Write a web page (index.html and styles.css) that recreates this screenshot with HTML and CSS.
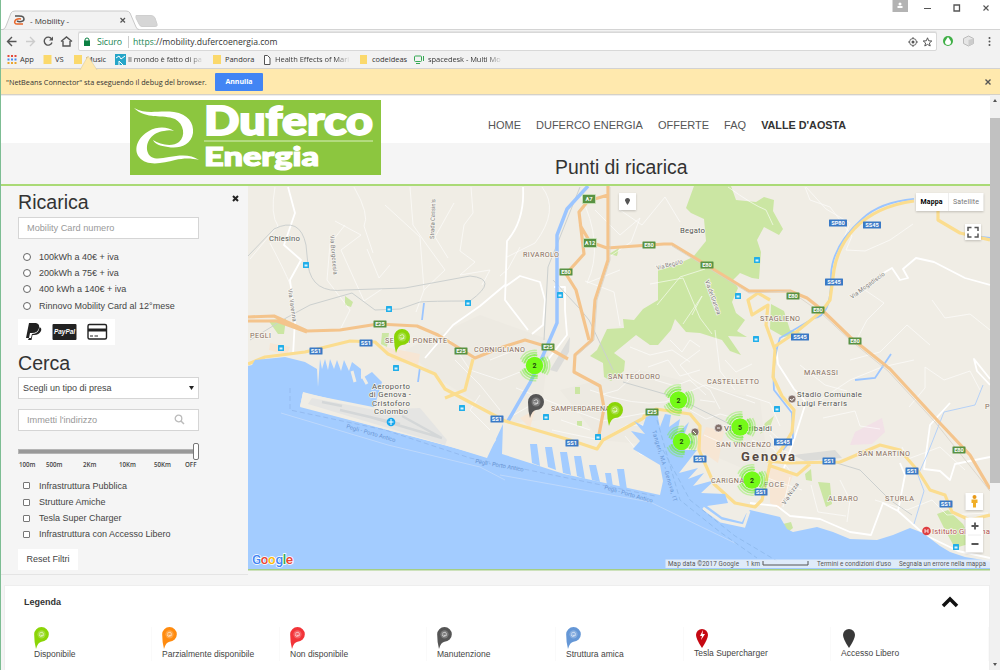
FILE: index.html
```html
<!DOCTYPE html>
<html lang="it">
<head>
<meta charset="utf-8">
<title>- Mobility -</title>
<link rel="stylesheet" href="styles.css">
</head>
<body>
<div class="window">
  <div class="tabstrip">
    <svg class="tab-shape" width="162" height="30" viewBox="0 0 162 30">
      <path d="M0 29.500H3Q5 29 6 26L11 13Q12 11 15 11H126Q129 11 130 13L136 27Q137 29.500 139 29.500" fill="#f2f2f2" stroke="#c9c9c9"/>
      <path d="M136 15.500H151Q154 15.500 155 18L157 24Q158 26.500 155 26.500H142Q140 26.500 139 24L136 18Z" fill="#d6d6d6" stroke="#cfcfcf"/>
      <path d="M15 16C19 16 24 15 24 19C24 22 19 22 17 21" fill="none" stroke="#555" stroke-width="1.500"/>
      <path d="M21 19C14 18 13 24 17 24H23" fill="none" stroke="#e8662a" stroke-width="1.500"/>
      <path d="M120.500 18L125 22.500M125 18L120.500 22.500" stroke="#555" stroke-width="1.200"/>
    </svg>
    <span class="tab-title">- Mobility -</span>
    <svg class="window-buttons" width="110" height="16" viewBox="890 0 110 16">
      <path d="M892.500 0H908V12H892.500Z" fill="#b3b3b3"/>
      <circle cx="900" cy="4" r="1.500" fill="#fff"/><path d="M897.500 8V6H902.500V8Z" fill="#fff"/>
      <path d="M924 8.500H931" stroke="#555"/><path d="M954 5H959.500V11H954Z" fill="none" stroke="#555" stroke-width="1.300"/>
      <path d="M983.500 5.500L988.500 10.500M988.500 5.500L983.500 10.500" stroke="#555" stroke-width="1.100"/>
    </svg>
  </div>
  <div class="toolbar">
    <svg width="78" height="23" viewBox="0 30 78 23" fill="none" stroke="#555" stroke-width="1.400">
      <path d="M16.500 41.500H8M12 37L7.500 41.500L12 46"/>
      <path d="M26 41.500H34M30 37L34.500 41.500L30 46" stroke="#ccc"/>
      <path d="M51.500 38.800A4 4 0 1 0 52 42.500"/><path d="M53 36.500V40.500H49Z" fill="#555" stroke="none"/>
      <path d="M61 41.500L66.500 37L72 41.500M63 41V46H70V41"/>
    </svg>
    <div class="address">
      <svg width="8" height="10" viewBox="0 0 8 10"><path d="M2 4V3Q2 1 4 1Q6 1 6 3V4" fill="none" stroke="#0b8043"/><rect x="1" y="3.500" width="6" height="5.500" fill="#0b8043"/></svg>
      <span class="secure">Sicuro</span><span class="url"><b>https:</b>//mobility.dufercoenergia.com</span>
      <svg class="address-icons" width="26" height="12" viewBox="0 0 26 12"><circle cx="6" cy="6" r="3.500" fill="none" stroke="#666"/><circle cx="6" cy="6" r="1.500" fill="#555"/><path d="M6 1V3M6 9V11M1 6H3M9 6H11" stroke="#666"/><path d="M20.500 1.800L21.700 4.800L24.800 5L22.400 7L23.200 10L20.500 8.400L17.800 10L18.600 7L16.200 5L19.300 4.800Z" fill="none" stroke="#555"/></svg>
    </div>
    <svg width="63" height="23" viewBox="937 30 63 23"><circle cx="948" cy="41" r="5" fill="#3faf46"/><path d="M948 37Q951 41 951 42A3 3 0 0 1 945 42Q945 41 948 37Z" fill="#fff"/><path d="M963.500 38.500L968.500 36L973.500 38.500V43.500L968.500 46L963.500 43.500Z" fill="#e6e6e6" stroke="#bbb"/><path d="M968.500 40V46L973.500 43.500V38.500Z" fill="#ccc"/><g fill="#555"><circle cx="989.500" cy="38" r="1"/><circle cx="989.500" cy="41.500" r="1"/><circle cx="989.500" cy="45" r="1"/></g></svg>
  </div>
  <div class="bookmarks">
    <svg class="bm-icons" width="440" height="17" viewBox="0 0 440 17">
      <g stroke-width="2" stroke-dasharray="2 1.500"><path d="M7.500 4H16.500" stroke="#e3493b"/><path d="M7.500 7.500H16.500" stroke="#4587ef"/><path d="M7.500 11H16.500" stroke="#e8a52e"/></g>
      <g fill="#fbd96c"><rect x="43.500" y="3" width="8" height="9"/><rect x="74" y="3" width="8" height="9"/><rect x="213" y="3" width="8" height="9"/><rect x="360" y="3" width="7" height="9"/></g>
      <rect x="115" y="2" width="11" height="11" fill="#25a5c8"/><path d="M116 6L119 4L121 7L125 4M119 13V9L123 13" stroke="#fff" fill="none"/>
      <path d="M264.500 3.500H267.500L270 6V12.500H264.500Z" fill="#fff" stroke="#555"/>
      <rect x="414.500" y="4" width="7" height="5.500" rx="1" fill="none" stroke="#35a853"/><path d="M416 11.500H420M423.500 4V9" stroke="#35a853"/>
    </svg>
    <span class="bm bm-app">App</span><span class="bm bm-vs">VS</span><span class="bm bm-music">Music</span><span class="bm bm-mondo">Il mondo è fatto di pa</span><span class="bm bm-pandora">Pandora</span><span class="bm bm-health">Health Effects of Mari</span><span class="bm bm-code">codeIdeas</span><span class="bm bm-space">spacedesk - Multi Mo</span>
  </div>
  <div class="infobar">
    <svg class="info-arrow" width="20" height="16" viewBox="0 0 20 16"><path d="M1 16L9 2L18 16" fill="#ffe9ae" stroke="#dccb9e" stroke-width=".6"/></svg>
    <span class="info-text">"NetBeans Connector" sta eseguendo il debug del browser.</span>
    <button class="cancel">Annulla</button>
    <svg class="info-close" width="8" height="8" viewBox="0 0 8 8"><path d="M1.500 1.500L6.500 6.500M6.500 1.500L1.500 6.500" stroke="#555" stroke-width="1.400"/></svg>
  </div>

  <div class="viewport">
    <div class="page">
      <header class="header">
        <nav class="nav"><a>HOME</a><a>DUFERCO ENERGIA</a><a>OFFERTE</a><a>FAQ</a><a class="strong">VALLE D'AOSTA</a></nav>
        <svg class="logo" width="251" height="75" viewBox="130 100 251 75">
          <rect x="130" y="100" width="251" height="75" fill="#8cc63f"/>
          <path d="M134 108C147 115 158 110 174 112C188 114 194 123 193 133C191 146 178 149 168 147C160 146 155 144 153 140C160 145 173 147 179 142C186 136 184 124 175 119C163 114 146 120 134 108Z" fill="#fff"/>
          <path d="M174 131C168 127 158 126 149 131C138 137 133 149 139 157C147 167 163 163 175 160C184 158 191 158 199 160C191 154 180 155 169 157C159 159 151 160 148 153C144 142 153 132 164 131C168 130 171 130 174 131Z" fill="#fff"/>
          <path d="M204 141H373" stroke="#d9efbd"/>
          <text class="logo-text" x="204" y="135" font-size="40" stroke-width="1.800" textLength="169" lengthAdjust="spacingAndGlyphs">Duferco</text>
          <text class="logo-text" x="204" y="165.500" font-size="26.500" stroke-width="1.200" textLength="115" lengthAdjust="spacingAndGlyphs">Energia</text>
        </svg>
      </header>
      <div class="title-bar"><h1>Punti di ricarica</h1></div>
      <main class="content">
        <aside class="sidebar">
          <svg class="side-close" width="7" height="7" viewBox="0 0 7 7"><path d="M1 1L6 6M6 1L1 6" stroke="#222" stroke-width="2"/></svg>
          <h2>Ricarica</h2>
          <div class="field placeholder">Mobility Card numero</div>
          <div class="options plans">
            <label><i class="radio"></i><span>100kWh a 40€ + iva</span></label>
            <label><i class="radio"></i><span>200kWh a 75€ + iva</span></label>
            <label><i class="radio"></i><span>400 kWh a 140€ + iva</span></label>
            <label><i class="radio"></i><span>Rinnovo Mobility Card al 12°mese</span></label>
          </div>
          <div class="payments">
            <svg width="97" height="26" viewBox="18 319 97 26"><path d="M29 323H36Q40 324 39 328Q38 333 32 333H30L29 338H26Z" fill="#222"/><path d="M39.500 327Q42 328 41 331Q39 335 34 335H32.500L31.500 340H28L29 338H31L32 334Q39 334 39.500 327Z" fill="#222"/><rect x="52.500" y="324" width="24" height="16" rx="1" fill="#222"/><text x="54" y="334" font-size="7" font-weight="bold" font-style="italic" fill="#fff" textLength="21" lengthAdjust="spacingAndGlyphs">PayPal</text><rect x="88" y="324.500" width="18.500" height="14.500" rx="1.500" fill="#fff" stroke="#222" stroke-width="1.400"/><path d="M88 330H107" stroke="#222" stroke-width="3"/><path d="M90 336H93M94.500 336H98" stroke="#222"/></svg>
          </div>
          <h2 class="search-title">Cerca</h2>
          <div class="field select"><span>Scegli un tipo di presa</span><svg width="5" height="4" viewBox="0 0 5 4"><path d="M0 0H5L2.500 4Z" fill="#222"/></svg></div>
          <div class="field placeholder address-field"><span>Immetti l'indirizzo</span><svg width="11" height="11" viewBox="0 0 11 11"><circle cx="4.500" cy="4.500" r="3.300" fill="none" stroke="#bbb" stroke-width="1.300"/><path d="M7 7L10 10" stroke="#bbb" stroke-width="1.500"/></svg></div>
          <div class="slider"><i class="knob"></i></div>
          <div class="ticks"><span>100m</span><span>500m</span><span>2Km</span><span>10Km</span><span>50Km</span><span>OFF</span></div>
          <div class="options filters">
            <label><i class="check"></i><span>Infrastruttura Pubblica</span></label>
            <label><i class="check"></i><span>Strutture Amiche</span></label>
            <label><i class="check"></i><span>Tesla Super Charger</span></label>
            <label><i class="check"></i><span>Infrastruttura con Accesso Libero</span></label>
          </div>
          <button class="reset">Reset Filtri</button>
        </aside>
        <svg class="map" width="742" height="383" viewBox="248 186 742 383">
          <defs>
            <g id="train"><rect x="-3" y="-3" width="6" height="6" rx=".5" fill="#21aee9"/><path d="M-1.500 -.5H1.500V1.500H-1.500Z" fill="#d9f2fc"/></g>
            <g id="cluster"><circle r="15.300" fill="none" stroke="#6cf02c" stroke-opacity=".35" stroke-width="1.500" stroke-dasharray="20 12.040" stroke-dashoffset="10"/><circle r="12.800" fill="none" stroke="#6cf02c" stroke-opacity=".5" stroke-width="1.700" stroke-dasharray="19 7.800" stroke-dashoffset="10"/><circle r="10.500" fill="none" stroke="#6cf02c" stroke-opacity=".7" stroke-width="2" stroke-dasharray="17 5" stroke-dashoffset="9"/><circle r="8.700" fill="#74fa18"/></g>
            <g id="pin"><path d="M-8 0A8 8 0 1 1 0 8Q-4 8.500 -6 16Q-8 9 -8 0Z"/><circle r="4.500" fill="#fff" opacity=".22"/><path d="M-2.500 -1Q2 -4 2 0Q1 2 -1 1M2.500 1Q-3 4 -2 0" fill="none" stroke="#fff" stroke-width=".8" opacity=".8"/></g>
          </defs>
          <rect x="248" y="186" width="742" height="383" fill="#f0ede5"/>
          <g fill="#edeae2">
            <path d="M480 315L550 340L540 420L510 423L440 380L405 350Z M560 390L640 370L760 400L770 480L700 450L600 440Z"/>
          </g>
          <g fill="#cbe6a3">
            <path d="M694 186H731L736 200L756 202L764 197L774 200L773 211L783 229L779 235L764 227L757 240L761 252L759 279L752 278L740 273L733 280L738 288L732 302L736 313L745 320L737 331L747 337L728 336L741 355L730 351L722 340L700 333L686 332L675 319L671 330L658 345L650 345L636 335L625 344L614 353L625 361L624 371L611 381L604 377L603 363L590 356L597 350L607 329L624 328L623 319L634 320L643 309L658 300L658 270L680 263L693 257L706 241L704 219L691 213L686 208Z"/>
            <path d="M609 254L619 248L617 256ZM771 304L784 311L790 330L802 333L784 337L770 329ZM268 320L286 319L284 334L278 334ZM345 296L353 302L351 307L345 305ZM382 333L389 333L387 347L381 344ZM765 423L774 416L770 427L760 434ZM805 474L811 469L812 481L806 480ZM818 482L830 483L832 504L826 507ZM937 514L948 510L963 524L972 543L955 548L945 530ZM575 387h5v7h-5zM577 421h5v5h-5zM783 524l8 -2l2 6l-5 4z"/>
          </g>
          <g fill="#f7e6d4"><path d="M385 347L420 354L418 366L392 360ZM270 343L290 347L287 355L269 350ZM706 427L724 431L718 463L697 448ZM770 466L793 475L780 510L770 503ZM520 418L535 410L530 428Z"/></g>
          <path d="M850 445L855 432L882 418L885 432L872 444Z" fill="#f2e1e7"/>
          <g class="minor">
            <path d="M275 187Q270 215 278 226L264 242L250 259M354 187Q370 215 364 226L373 253M345 225L330 244L327 280L350 310L340 330M385 205L420 237L424 290L416 312M410 187L413 225L424 241L445 270L424 290M471 187L473 213L464 225L460 251L475 262L460 275L490 270L482 285M367 249L379 278L390 265M270 243Q292 285 293 293M335 221L361 235L341 250L364 301L382 289M454 203L435 237L448 258"/>
            <path d="M542 187Q560 210 535 243L507 257M580 194Q605 245 587 283L620 270M595 210L620 235L640 218L631 242L609 257M620 210L642 225L665 197L680 222M728 187Q753 205 766 210L773 225M806 187L826 209L850 223L842 243M585 281L614 292L620 326M650 284L683 278L700 318L712 334M657 305L680 277L705 269M692 315L702 296L683 324M520 247L508 269L500 276"/>
            <path d="M805 187L810 200L830 207L852 236L846 250L865 251L890 240L913 224M865 290L884 303L867 320L858 337M850 360L880 352L907 325L930 345M820 400L850 380L882 367L914 360M909 407L925 388L925 367L944 380L970 371L980 390M932 300L945 318L970 314L990 330M800 365L825 385L847 391M823 418L855 411L860 426L880 429M770 435L780 450L807 458L829 452M902 447L908 459L940 447L965 470M875 500L907 510L932 500L947 515L988 513"/>
            <path d="M590 390Q635 407 665 402L705 385L755 403M516 388L564 407L602 421L667 409M540 400L510 417M605 438L627 425L660 425M561 420L590 430M552 430L600 440M625 436L640 454L658 460M640 370L618 390L600 395M700 350L680 365L692 379L710 390L720 409M715 330L720 371L735 390M746 395L770 403L780 426M752 440L773 448L790 471M790 477L783 507M767 428L778 438L790 440M760 475L778 482L802 490M811 485L818 512L846 516M840 480L850 500L847 522"/>
            <path d="M630 347L650 355L672 350L690 362M648 367L668 360L680 376L700 370M655 380L675 386L690 380L706 395M670 340L682 352L690 340L700 347M725 360L736 372L752 364M690 410L706 419L720 414L738 419M700 400L715 402M704 435L722 443L735 440M450 340L470 370L500 380L520 372M490 360L510 352M455 360L480 385L500 410M480 395L470 410L490 430"/>
          </g>
          <g class="local">
            <path d="M288 187L295 213L284 245L301 260L290 280L295 320L293 355M506 286L520 276L540 282L545 300L543 325L532 334M523 187Q525 220 507 241L505 300L528 330M554 287H565V310L567 335L547 361M990 285L965 278L934 262L916 258L903 269L908 278L900 280L892 268L880 275M425 358L453 325L480 306L505 285M776 346L778 364L794 389L806 402L795 437L784 468M990 379L974 359L977 371L990 385M950 403L930 425L924 469L940 471L950 480L955 464L990 457M900 463L905 475L898 511M777 506L790 516L820 519L850 532L871 535L883 503L898 511L925 535L958 551L990 558M750 503L777 506"/>
          </g>
          <g fill="none" stroke="#ccd0cf" stroke-width="1">
            <path d="M248 256L274 229Q300 216 306 245L308 265Q312 294 345 290L405 288L470 276Q500 279 470 301Q430 301 420 302L400 309L375 310L352 293L310 305L286 318L250 340M553 280L580 309L589 320L613 370M623 382L675 397L750 434M830 461L860 470L890 500L912 515M580 187L548 267L544 340"/>
          </g>
          <path d="M570 337L569 352L557 372L550 370Z" fill="#dcdcd9"/><path d="M793 455L835 450L842 458L805 461Z" fill="#dcdcd9"/>
          <g fill="none" stroke="#9bc5ff">
            <path d="M588 186L567 209L557 235V287L557 323L541 360L530 383L508 421" stroke-width="3.500"/>
            <path d="M424 303L422 320M420 367L418 382M990 238L965 235M914 199Q880 202 862 219Q832 246 831 275Q832 316 814 318L780 338Q772 360 774 390L792 413L793 438L783 450M855 380L875 378L891 354" stroke-width="1.800"/>
            <path d="M983 385L975 405L944 412L933 440L927 455L918 475L924 491L914 524" stroke-width="1" opacity=".7"/>
          </g>
          <g class="yellow">
            <path d="M248 364L265 357L305 352L350 341L375 342L388 354L435 374L445 389L505 421L570 440L597 449L603 440L642 419L656 409L690 414L700 426L699 450L714 484L735 503L755 507L762 500L770 464L783 447L792 432L794 410L782 396L773 377L775 350L766 325L768 305L752 315L748 300L758 293L770 300"/>
            <path d="M914 201Q877 206 855 228Q838 246 834 270L830 300L822 311L795 333L774 347M938 202V220L960 233L990 240M767 461L787 463L840 462L880 445L900 450L918 471L930 490L945 495L952 512L970 520L990 515M768 465L797 475L810 464M445 398L465 390L473 359M643 415L655 425"/>
          </g>
          <g class="highway">
            <path d="M248 317L274 316L307 331L340 330L378 324L417 326L438 335L475 358L500 348L525 340L545 346L568 359M608 186V260L595 300L592 340L575 355L574 372L600 386L604 408L598 440M608 195L588 201L579 212L584 254L566 274L576 290L589 340M580 225L590 242L607 248L664 244H672L749 291L790 291L807 298L821 309L850 337L890 369L937 420L970 455L990 489M248 321L277 321L307 332"/>
          </g>
          <path class="thin-line" d="M610 187V260L597 300L594 340L577 355M672 246L749 293L790 291L820 312L850 340L888 371L935 422L990 491"/>
          <path id="sea" fill="#a3ccff" d="M248 366L252 365L255 360L285 357L305 362L317 369L318 387L320 359L322 369L325 359L328 370L330 359L334 369L337 360L341 371L344 360L349 371L352 362L361 369V379L372 372L382 382L374 408L350 404L303 392L300 407L445 445L487 458L503 424L502 454L564 474L660 495L663 481L660 465L633 449L640 441L631 431L645 434L634 421L643 426L646 417L657 413L660 427L665 414L671 415L669 427L680 419L677 434L689 422L683 438L694 442L680 450L697 450L679 473L698 468L688 479L704 473L693 486L715 480L701 493L725 494L728 503L707 506L722 517L742 522L746 514L750 510L780 517L787 529L793 532L817 527L833 532L850 539L877 540L893 535L910 528L923 533L940 546L950 552L965 557L983 560L990 562V569H248Z"/>
          <g fill="#a3ccff"><path d="M530 444h7l3 22l-8-3zM545 447h7l4 23l-8-3zM560 452h7l4 23l-8-2zM574 456h7l4 23l-8-3zM589 465h7l4 17l-8-2zM605 473h6l2 14l-6-2zM617 469h7l3 21l-7-2z"/></g>
          <g fill="none" stroke="#f0ede5" stroke-width="3"><path d="M303 394L484 455L495 439M703 508L721 521L744 526L749 511M728 507L733 517M352 371L355 382M362 375L367 384"/></g>
          <path d="M303 393L378 408L395 390L440 395L487 440L484 456L300 406Z" fill="#f0ede5"/>
          <path d="M312 398L375 410L420 408L447 440L445 445L308 404Z" fill="#e5e5e3"/>
          <path d="M322 402L342 406M340 410L400 424M370 417L442 438M402 416L440 437" fill="none" stroke="#d4d7d8" stroke-width="2.500"/>
          <g fill="none" stroke="#bdd8fc"><path d="M281 413L388 445L480 467L505 480M500 475L650 502L737 544"/><path d="M290 388V410L385 430L470 458L655 496" stroke="#94bbf0" stroke-dasharray="5 3"/><path d="M657 420L680 500L720 532L757 558M663 450L690 500L735 536L777 561" stroke="#91bcef" stroke-dasharray="5 3"/></g>
          <g class="ferry"><text transform="translate(346 428) rotate(16)" textLength="51">Pegli - Porto Antico</text><text transform="translate(475 463) rotate(10)" textLength="49">Pegli - Porto Antico</text><text transform="translate(604 489) rotate(16)" textLength="50">Pegli - Porto Antico</text><text transform="translate(652 431) rotate(73)" textLength="74">Tangeri, MA - Genova, IT</text></g>
          <g class="road-name"><text transform="translate(330 235) rotate(85)" textLength="40">Via Borgosesia</text><text transform="translate(434 239) rotate(-88)" textLength="40">Strada Cassinis</text><text transform="translate(288 289) rotate(82)" textLength="33">Via Varenna</text><text transform="translate(657 270) rotate(-15)" textLength="27">Via Begato</text><text transform="translate(705 281) rotate(70)" textLength="36">Via dei Granara</text><text transform="translate(852 299) rotate(-36)" textLength="41">Via Mogadiscio</text><text transform="translate(785 505) rotate(-56)" textLength="25">Via Nizza</text></g>
          <g class="place">
            <text x="269" y="240.500" textLength="31">Chiesino</text><text x="680" y="233" textLength="25">Begato</text>
            <g class="district"><text x="250" y="338" textLength="21">PEGLI</text><text x="385" y="343" textLength="62">SESTRI PONENTE</text><text x="474" y="352" textLength="51">CORNIGLIANO</text><text x="523" y="257" textLength="36">RIVAROLO</text><text x="608" y="379" textLength="52">SAN TEODORO</text><text x="707" y="384" textLength="52">CASTELLETTO</text><text x="551" y="411" textLength="59">SAMPIERDARENA</text><text x="716" y="447" textLength="55">SAN VINCENZO</text><text x="711" y="483" textLength="44">CARIGNANO</text><text x="760" y="321" textLength="40">STAGLIENO</text><text x="804" y="375" textLength="34">MARASSI</text><text x="858" y="456" textLength="52">SAN MARTINO</text><text x="828" y="501" textLength="30">ALBARO</text><text x="885" y="501" textLength="29">STURLA</text><text x="764" y="487" textLength="20">FOCE</text><text x="985" y="409">P</text></g>
            <text x="741" y="461" class="city" textLength="54">Genova</text>
            <text x="372" y="389" textLength="38">Aeroporto</text><text x="369" y="397" textLength="42">di Genova -</text><text x="372" y="406" textLength="38">Cristoforo</text><text x="374" y="414" textLength="34">Colombo</text>
            <text x="797" y="397" textLength="65">Stadio Comunale</text><text x="797" y="406" textLength="50">Luigi Ferraris</text><text x="724" y="431" textLength="48">Via Garibaldi</text><text x="932" y="534" textLength="58" fill="#b45656">Istituto Giannina</text>
          </g>
          <circle cx="391" cy="422" r="4.300" fill="#16a7ee"/><path d="M388.500 422H393.500M391 419V425" stroke="#fff"/>
          <g fill="#83716b" stroke="#fff" stroke-width=".6"><circle cx="792" cy="399" r="4"/><circle cx="718.500" cy="428" r="4"/><circle cx="695" cy="432" r="4"/></g><path d="M790 399Q792 402 794 398M717 428H720M693 431L696 434" stroke="#fff" fill="none"/>
          <circle cx="926.500" cy="531" r="4.300" fill="#de3d40"/><path d="M925 529V533M928 529V533M925 531H928" stroke="#fff" stroke-width=".8"/>
          <use href="#train" x="306" y="265"/><use href="#train" x="389" y="309"/><use href="#train" x="468" y="303"/><use href="#train" x="281" y="348"/><use href="#train" x="396" y="368"/><use href="#train" x="462" y="408"/><use href="#train" x="560" y="295"/><use href="#train" x="546" y="417"/><use href="#train" x="598" y="437"/><use href="#train" x="757" y="260"/><use href="#train" x="738" y="296"/><use href="#train" x="756" y="339"/><use href="#train" x="777" y="409"/><use href="#train" x="956" y="547"/>
          <g class="shields green">
            <g transform="translate(380 324)"><rect/><text>E25</text></g><g transform="translate(461 351)"><rect/><text>E25</text></g><g class="outlined" transform="translate(589 199)"><rect/><text>A7</text></g><g class="outlined" transform="translate(590 243)"><rect/><text>A12</text></g><g transform="translate(566 272)"><rect/><text>E80</text></g><g transform="translate(649 245)"><rect/><text>E80</text></g><g transform="translate(707 265)"><rect/><text>E80</text></g><g transform="translate(548 347)"><rect/><text>E25</text></g><g transform="translate(652 412)"><rect/><text>E25</text></g><g transform="translate(793 296)"><rect/><text>E80</text></g><g transform="translate(818 310)"><rect/><text>E80</text></g><g transform="translate(855 341)"><rect/><text>E80</text></g><g transform="translate(959 450)"><rect/><text>E80</text></g>
          </g>
          <g class="shields blue">
            <g transform="translate(366 343)"><rect/><text>SS1</text></g><g transform="translate(316 351)"><rect/><text>SS1</text></g><g transform="translate(497 419)"><rect/><text>SS1</text></g><g transform="translate(572 443)"><rect/><text>SS1</text></g><g transform="translate(700 459)"><rect/><text>SS1</text></g><g transform="translate(829 461)"><rect/><text>SS1</text></g><g transform="translate(912 471)"><rect/><text>SS1</text></g><g transform="translate(946 504)"><rect/><text>SS1</text></g><g transform="translate(761 492)"><rect/><text>SS1</text></g>
            <g class="wide"><g transform="translate(838 223)"><rect/><text>SP80</text></g><g transform="translate(872 225)"><rect/><text>SS45</text></g><g transform="translate(834 282)"><rect/><text>SS45</text></g><g transform="translate(800 337)"><rect/><text>SS45</text></g><g transform="translate(783 442)"><rect/><text>SS45</text></g></g>
          </g>
          <use href="#pin" x="402" y="337" fill="#8bd507"/><use href="#pin" x="615" y="410" fill="#8bd507"/><use href="#pin" x="536" y="402" fill="#555"/>
          <g class="cluster-label"><use href="#cluster" x="534.500" y="365.500"/><text x="534.500" y="368">2</text><use href="#cluster" x="678.500" y="400"/><text x="678.500" y="402.500">2</text><use href="#cluster" x="681.500" y="441.500"/><text x="681.500" y="444">2</text><use href="#cluster" x="740" y="427"/><text x="740" y="429.500">5</text><use href="#cluster" x="752" y="480"/><text x="752" y="483">2</text></g>
          <g fill="#fff" class="controls"><rect x="619" y="193" width="17" height="17"/><rect x="916" y="193" width="67.500" height="18"/><rect x="965" y="224" width="16" height="16"/><rect x="965.500" y="493" width="17.500" height="17"/><rect x="965.500" y="517.500" width="17.500" height="35"/></g>
          <path d="M625 200.500A2.500 2.500 0 1 1 630 200.500Q629 203 627.500 205Q626 203 625 200.500Z" fill="#555"/><path d="M948.500 193V211M968 535H981" stroke="#eee"/>
          <text x="920.500" y="204" font-size="7" font-weight="bold" textLength="22">Mappa</text><text x="953" y="204" font-size="7" fill="#777" textLength="26">Satellite</text>
          <path d="M968 231V227.500H971.500M974.500 227.500H978V231M978 233.500V237H974.500M971.500 237H968V233.500" fill="none" stroke="#555" stroke-width="1.500"/>
          <circle cx="974.500" cy="497" r="2" fill="#e89a19"/><path d="M971.500 499.500H977.500V503H976V507.500H973V503H971.500Z" fill="#f0ae27"/>
          <path d="M971.500 526H978.500M975 522.500V529.500M971.500 544H978.500" stroke="#555" stroke-width="1.800"/>
          <g class="google" font-size="13.500"><text x="252" y="563.500" textLength="41"><tspan fill="#4285f4">G</tspan><tspan fill="#ea4335">o</tspan><tspan fill="#fbbc05">o</tspan><tspan fill="#4285f4">g</tspan><tspan fill="#34a853">l</tspan><tspan fill="#ea4335">e</tspan></text></g>
          <rect x="665.500" y="559.500" width="324.500" height="8.500" fill="#eef2f7" opacity=".8"/>
          <g class="credits"><text x="668" y="566" textLength="71">Map data ©2017 Google</text><text x="746" y="566" textLength="14">1 km</text><text x="817" y="566" textLength="74">Termini e condizioni d'uso</text><text x="899" y="566" textLength="87">Segnala un errore nella mappa</text></g><path d="M763 561V565H808V561" fill="none" stroke="#555"/>
        </svg>
      </main>
      <section class="legend">
        <div class="legend-head"><b>Legenda</b><svg width="18" height="12" viewBox="0 0 18 12"><path d="M2 10L9 3L16 10" fill="none" stroke="#111" stroke-width="3.500"/></svg></div>
        <div class="legend-items">
          <div><svg class="dot green-dot" width="15" height="22" viewBox="-8 -8 16 24"><use href="#pin"/></svg><span>Disponibile</span></div>
          <div><svg class="dot orange-dot" width="15" height="22" viewBox="-8 -8 16 24"><use href="#pin"/></svg><span>Parzialmente disponibile</span></div>
          <div><svg class="dot red-dot" width="15" height="22" viewBox="-8 -8 16 24"><use href="#pin"/></svg><span>Non disponibile</span></div>
          <div><svg class="dot gray-dot" width="15" height="22" viewBox="-8 -8 16 24"><use href="#pin"/></svg><span>Manutenzione</span></div>
          <div><svg class="dot blue-dot" width="15" height="22" viewBox="-8 -8 16 24"><use href="#pin"/></svg><span>Struttura amica</span></div>
          <div class="raised"><svg class="dot" width="16" height="24" viewBox="0 0 16 24"><path d="M8 21Q2 12 2 8A6 6 0 0 1 14 8Q14 12 8 21Z" fill="#c50812"/><path d="M9 3L6 9H8L7 13L11 7H8.500Z" fill="#fff"/></svg><span>Tesla Supercharger</span></div>
          <div class="raised"><svg class="dot" width="16" height="24" viewBox="0 0 16 24"><path d="M8 21Q2 12 2 8A6 6 0 0 1 14 8Q14 12 8 21Z" fill="#393939"/></svg><span>Accesso Libero</span></div>
        </div>
      </section>
    </div>
    <div class="scrollbar"><svg width="10" height="23" viewBox="0 0 10 23"><path d="M3 7L5 4L7 7Z" fill="#555"/></svg><div class="thumb"></div><svg class="down" width="10" height="12" viewBox="0 0 10 12"><path d="M3 5L5 8L7 5Z" fill="#555"/></svg></div>
  </div>
</div>
</body>
</html>
```

FILE: styles.css
```css
* { box-sizing: border-box; }
body { margin: 0; font-family: "Liberation Sans", Arial, sans-serif; color: #444; }
svg { display: block; flex: none; }
.window { width: 1000px; height: 670px; overflow: hidden; display: flex; flex-direction: column; border-left: 1px solid #7dbd93; background: #fff; }
.window > * { margin-left: -1px; padding-left: 1px; }
.tabstrip { height: 30px; flex: none; position: relative; display: flex; justify-content: space-between; border-bottom: 1px solid #d4d4d4; font-family: "Open Sans", sans-serif; }
.tab-shape { margin-left: -1px; }
.tab-title { position: absolute; left: 30px; top: 15px; font-size: 8px; line-height: 12px; color: #333; }
.window .toolbar { height: 23px; flex: none; display: flex; background: #f2f2f2; padding: 0; }
.address { flex: 1; height: 19px; margin-top: 2px; border: 1px solid #d8d8d8; border-radius: 2px; background: #fff; display: flex; align-items: center; padding-left: 4px; font: 8.8px "Open Sans", sans-serif; box-shadow: 0 -1px #e3e3e3; }
.secure { color: #218653; margin-left: 6px; padding-right: 6px; width: 32px; border-right: 1px solid #ccc; letter-spacing: -.1px; }
.url { margin-left: 4px; color: #333; font-size: 8.6px; white-space: nowrap; }
.url b { color: #218653; font-weight: 400; }
.address-icons { margin-left: auto; margin-right: 3px; }
.window .bookmarks { height: 16px; flex: none; background: #f2f2f2; border-bottom: 1px solid #d2d2d2; padding: 0; display: grid; grid-template-columns: 20px 35px 31px 42px 97px 50px 97px 56px 1fr; font: 7.5px/12px "Open Sans", sans-serif; color: #333; position: relative; }
.bm-icons { position: absolute; left: 0; top: -1px; }
.bm { grid-row: 1; white-space: nowrap; letter-spacing: -.05px; }
.bm-app { grid-column: 2; }
.bm-vs { grid-column: 3; }
.bm-music { grid-column: 4; }
.bm-mondo { grid-column: 5; }
.bm-pandora { grid-column: 6; }
.bm-health { grid-column: 7; }
.bm-code { grid-column: 8; }
.bm-space { grid-column: 9; }
.bm-mondo, .bm-health, .bm-space { justify-self: start; background: linear-gradient(90deg, #333 82%, #ddd); background-clip: text; -webkit-background-clip: text; color: transparent; }
.window .infobar { height: 26px; flex: none; background: #ffe9ae; border-bottom: 1px solid #d5d1c7; display: flex; align-items: center; padding-left: 6px; position: relative; }
.info-arrow { position: absolute; left: 79px; top: -15px; }
.info-text { width: 209px; font: 7.3px "Open Sans", sans-serif; white-space: nowrap; color: #333; }
.cancel { width: 48px; height: 18px; padding: 0; border: 0; border-radius: 1px; background: #4285f4; color: #fff; font: bold 7px "Open Sans", sans-serif; }
.info-close { margin-left: auto; margin-right: 8px; }
.viewport { flex: 1; min-height: 0; display: flex; }
.page { flex: 1; min-width: 0; background: #f5f5f5; overflow: hidden; }
.header { height: 48px; background: #fff; border-top: 1px solid #eee; position: relative; padding: 23px 0 0 487px; }
.nav { display: flex; gap: 15px; font-size: 11px; line-height: 13px; white-space: nowrap; }
.nav a { color: #555; }
.nav .strong { color: #333; font-weight: bold; font-size: 10.8px; }
.logo { position: absolute; z-index: 2; left: 129px; top: 4px; }
.logo-text { font-family: Lato, sans-serif; font-weight: 900; fill: #fff; stroke: #fff; }
.title-bar { height: 43px; border-bottom: 2px solid #aada76; padding-left: 554px; }
h1 { margin: 0; padding-top: 12px; font-size: 19.4px; line-height: 24px; font-weight: 400; color: #333; }
.content { height: 399px; display: flex; background: linear-gradient(#a5ce84, #a5ce84) 247px 383px / 742px 1.5px no-repeat; }
.sidebar { width: 247px; height: 389px; padding: 4px 48px 0 17px; position: relative; border-bottom: 1px solid #e4e4e4; }
.side-close { position: absolute; left: 231px; top: 9px; }
h2 { margin: 0; font-size: 19.6px; line-height: 24px; font-weight: 400; color: #333; }
.field { width: 181px; height: 22px; margin-top: 3px; border: 1px solid #d5d5d5; background: #fff; display: flex; align-items: center; padding: 0 4px; font-size: 9px; white-space: nowrap; }
.field.placeholder { padding-left: 8px; color: #999; font-size: 9.2px; }
.options { display: flex; flex-direction: column; padding-left: 5px; font-size: 9px; }
.options label { height: 16.2px; display: flex; align-items: center; gap: 8px; white-space: nowrap; }
.plans { margin-top: 10px; }
.radio { width: 8px; height: 8px; border: 1.5px solid #666; border-radius: 50%; background: #fff; }
.check { width: 7px; height: 7px; margin-right: 1px; border: 1px solid #777; border-radius: 1px; background: #fff; }
.payments { width: 97px; margin-top: 5px; background: #fff; }
.search-title { margin-top: 6px; }
.select { margin-top: 2px; justify-content: space-between; }
.address-field { margin-top: 10px; justify-content: space-between; }
.field.address-field { padding-right: 13px; }
.slider { width: 180px; height: 5px; margin-top: 18px; background: #999; border: 1px solid #b5b5b5; position: relative; }
.knob { position: absolute; right: -2px; top: -7px; width: 6px; height: 17px; border: 1px solid #777; border-radius: 2px; background: #fff; }
.ticks { height: 10px; width: 181px; margin-top: 6px; display: grid; grid-template-columns: 27px 37px 36px 35px 31px 1fr; font: 6.2px/10px "Open Sans", sans-serif; font-weight: 600; padding-left: 1px; }
.filters { margin-top: 8px; }
.reset { display: block; margin-top: 6px; width: 60px; height: 21px; padding: 0; border: 0; background: #fff; color: #444; font: 9px "Liberation Sans", sans-serif; }
.map { font-family: Roboto, sans-serif; }
.minor, .local { fill: none; stroke: #fff; stroke-linejoin: round; }
.minor { stroke-width: .8; opacity: .75; }
.local { stroke-width: 1.8; }
.yellow, .highway { fill: none; stroke-linejoin: round; stroke-width: 3.2; }
.yellow { stroke: #fbdd8f; }
.highway { stroke: #f4c48c; }
.thin-line { fill: none; stroke: #d8d2c6; stroke-width: .8; }
.place { font-size: 7.8px; fill: #555; }
.place > text, .district text, .road-name text { paint-order: stroke; stroke: #f7f5ef; stroke-width: 1.5px; }
.district { font-size: 7.2px; fill: #856b5c; }
.place .city { font-size: 13px; font-weight: 700; fill: #574a44; }
.road-name { font-size: 6px; fill: #777; }
.ferry { font-size: 5.8px; fill: #6995d4; }
.shields rect { x: -6.5px; y: -3.5px; width: 13px; height: 7px; rx: .5px; }
.shields text { font-size: 5.7px; font-weight: bold; fill: #fff; text-anchor: middle; transform: translateY(2px); }
.shields .outlined rect { stroke: #cde5bb; stroke-width: .8px; y: -4.5px; height: 9px; }
.green rect { fill: #589243; }
.blue rect { fill: #3979c5; }
.wide rect { x: -9px; width: 18px; }
.cluster-label text { font-size: 7px; font-weight: bold; text-anchor: middle; fill: #234510; }
.controls { filter: drop-shadow(0 1px 1px rgba(0,0,0,.2)); }
.google { font-weight: 500; paint-order: stroke; stroke: #fff; stroke-width: 1.5px; }
.credits { font-size: 6.3px; fill: #555; }
.legend { height: 90px; margin-left: 3px; background: #fff; border: 1px solid #eee; padding: 7px 0 0 19px; }
.legend-head { height: 18px; display: flex; align-items: center; justify-content: space-between; padding-right: 30px; font-size: 9px; color: #333; }
.legend-items { margin-top: 16px; display: grid; grid-template-columns: 128px 128px 147px 129px 128px 147px 1fr; font-size: 8.5px; }
.legend-items > div { padding-left: 10px; height: 34px; display: grid; grid-template-rows: 21px 12px; white-space: nowrap; border-right: 1px solid #fafafa; }
.legend-items span { line-height: 12px; z-index: 1; }
.dot { overflow: visible; }
.raised span { margin-top: -1px; }
.green-dot { fill: #8bd507; }
.orange-dot { fill: #ff8b0f; }
.red-dot { fill: #f23439; }
.gray-dot { fill: #555; }
.blue-dot { fill: #6597d6; }
.scrollbar { width: 10px; background: #f1f1f1; display: flex; flex-direction: column; }
.thumb { height: 365px; background: #c1c1c1; }
.down { margin-top: auto; }
```
